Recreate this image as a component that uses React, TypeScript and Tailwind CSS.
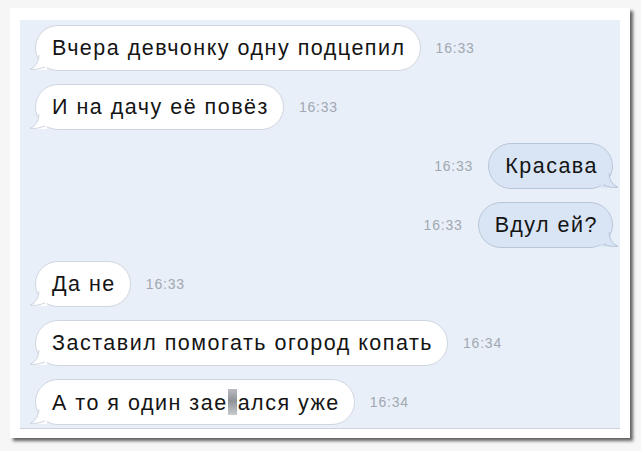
import React from "react";

type Msg = { text: React.ReactNode; time: string; out?: boolean };

const MESSAGES: Msg[] = [
  { text: "Вчера девчонку одну подцепил", time: "16:33" },
  { text: "И на дачу её повёз", time: "16:33" },
  { text: "Красава", time: "16:33", out: true },
  { text: "Вдул ей?", time: "16:33", out: true },
  { text: "Да не", time: "16:33" },
  { text: "Заставил помогать огород копать", time: "16:34" },
  {
    text: (
      <>
        А то я один зае
        <span className="mr-[1px] inline-block h-[26px] w-[9px] translate-y-[5px] bg-[linear-gradient(180deg,#b9bcc0_0%,#8f9397_45%,#a8abaf_70%,#c9cbce_100%)]" />
        ался уже
      </>
    ),
    time: "16:34",
  },
];

function Tail({ out }: { out?: boolean }) {
  const fill = out ? "#d9e5f4" : "#ffffff";
  const stroke = out ? "#b7c6d8" : "#cfd6df";
  return (
    <svg
      width="18"
      height="18"
      viewBox="0 0 18 18"
      className={
        out
          ? "absolute -right-[7px] -bottom-[1px] -scale-x-100"
          : "absolute -left-[7px] -bottom-[1px]"
      }
    >
      <path d="M10 0 L18 0 L18 17 L14 17 Q9 17 2 16 Q10 12 10 0 Z" fill={fill} />
      <path d="M10 2 Q10 12 1 16.5 Q9 17 16 14" fill="none" stroke={stroke} strokeWidth="1" />
    </svg>
  );
}

function Bubble({ msg }: { msg: Msg }) {
  return (
    <div
      className={
        msg.out
          ? "relative flex h-[46px] items-center rounded-full border border-[#b7c6d8] bg-[#d9e5f4] pl-[16px] pr-[14px] text-[21.5px] tracking-[1.5px] text-[#141414]"
          : "relative flex h-[46px] items-center rounded-full border border-[#cfd6df] bg-white pl-[16px] pr-[14px] text-[21.5px] tracking-[1.5px] text-[#141414]"
      }
    >
      <Tail out={msg.out} />
      <span className="relative">{msg.text}</span>
    </div>
  );
}

export default function App() {
  return (
    <div
      className="h-[451px] w-[641px] bg-[#f6f6f6] pl-[10px] pt-[8px]"
      style={{ fontFamily: "'Liberation Sans', Arial, sans-serif" }}
    >
      <div className="h-[430px] w-[620px] bg-white px-[10px] pt-[12px] shadow-[3px_3px_3px_rgba(0,0,0,0.6)]">
        <div className="flex h-[409px] w-[600px] flex-col gap-[13px] border-b border-[#cdd3da] bg-[#e8eff9] pl-[15px] pr-[7px] pt-[5px]">
          {MESSAGES.map((m, i) => (
            <div
              key={i}
              className={m.out ? "flex items-center justify-end gap-[15px]" : "flex items-center gap-[15px]"}
            >
              {m.out && <span className="text-[14px] tracking-[0.8px] text-[#a2a8b0]">{m.time}</span>}
              <Bubble msg={m} />
              {!m.out && <span className="text-[14px] tracking-[0.8px] text-[#a2a8b0]">{m.time}</span>}
            </div>
          ))}
        </div>
      </div>
    </div>
  );
}
